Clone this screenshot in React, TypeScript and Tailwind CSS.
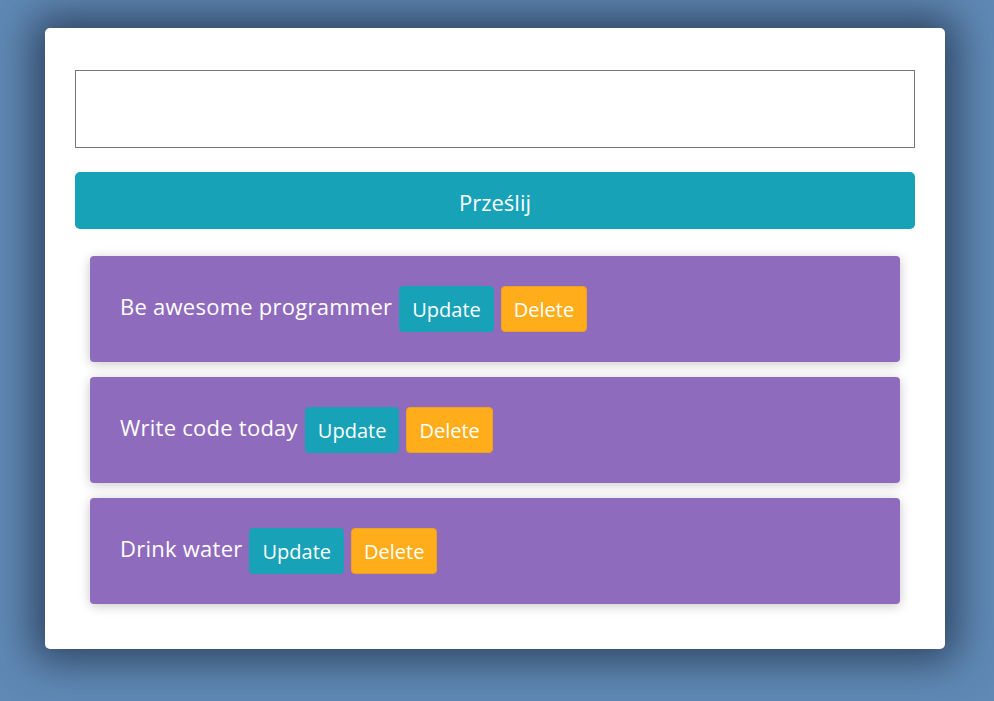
import React, { useState } from 'react';

type Todo = { id: number; text: string };

const initialTodos: Todo[] = [
  { id: 1, text: 'Be awesome programmer' },
  { id: 2, text: 'Write code today' },
  { id: 3, text: 'Drink water' },
];

const App: React.FC = () => {
  const [todos] = useState<Todo[]>(initialTodos);
  const [value, setValue] = useState('');

  return (
    <div className="min-h-screen w-full bg-[#6089b5] pt-[28px] font-['Open_Sans',sans-serif]">
      <div className="ml-[45px] w-[900px] rounded-[5px] bg-white px-[30px] pt-[42px] pb-[45px] shadow-[0_0_40px_12px_rgba(30,45,70,0.75)]">
        <input
          className="block h-[78px] w-full border border-[#767676] px-3 text-xl outline-none"
          value={value}
          onChange={e => setValue(e.target.value)}
        />
        <button className="mt-[24px] block h-[57px] w-full rounded-[5px] bg-[#17a2b8] pt-[4px] text-[22px] text-white">
          Prześlij
        </button>
        <div className="mt-[27px] flex flex-col gap-[15px] px-[15px]">
          {todos.map(todo => (
            <div
              key={todo.id}
              className="flex h-[106px] items-center rounded-[4px] bg-[#8f6bbd] px-[30px] text-white shadow-[0_2px_12px_rgba(0,0,0,0.22)]"
            >
              <span className="mb-[5px] text-[22px] tracking-[0.25px]">{todo.text}</span>
              <button className="ml-[7px] flex h-[46px] items-center rounded-[4px] border border-[#17a2b8] bg-[#17a2b8] px-[12px] pt-[2px] text-[20px] text-white">
                Update
              </button>
              <button className="ml-[7px] flex h-[46px] items-center rounded-[4px] border border-[#f0a020] bg-[#ffad1a] px-[12px] pt-[2px] text-[20px] text-white">
                Delete
              </button>
            </div>
          ))}
        </div>
      </div>
    </div>
  );
};

export default App;
